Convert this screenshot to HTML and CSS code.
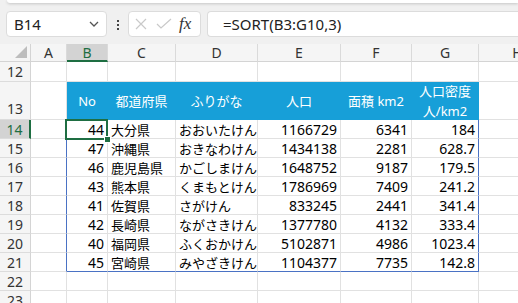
FILE: index.html
```html
<!DOCTYPE html>
<html lang="ja">
<head>
    <meta charset="UTF-8">
    <title>SORT</title>
    <link rel="stylesheet" href="styles.css">
</head>
<body>
    <div class="ribbon-edge"></div>
    <div class="formula-bar">
        <div class="name-box">
            <span>B14</span>
            <svg class="chevron" width="10" height="6" viewBox="0 0 10 6"><polyline points="1,1 5,5 9,1" fill="none" stroke="#555" stroke-width="1.3"/></svg>
        </div>
        <div class="dots"><i></i><i></i><i></i></div>
        <div class="fx-box">
            <svg width="12" height="12" viewBox="0 0 12 12"><path d="M1 1 L11 11 M11 1 L1 11" stroke="#c9c9c9" stroke-width="1.2"/></svg>
            <svg width="16" height="12" viewBox="0 0 16 12"><polyline points="1,6 5,10 15,1" fill="none" stroke="#c9c9c9" stroke-width="1.2"/></svg>
            <span class="fx">fx</span>
        </div>
        <div class="formula">=SORT(B3:G10,3)</div>
    </div>

    <div class="sheet">
        <!-- column headers -->
        <div class="corner"><svg width="12" height="12" viewBox="0 0 12 12"><polygon points="12,0 12,12 0,12" fill="#bdbdbd"/></svg></div>
        <div class="ch">A</div>
        <div class="ch sel">B</div>
        <div class="ch">C</div>
        <div class="ch">D</div>
        <div class="ch">E</div>
        <div class="ch">F</div>
        <div class="ch">G</div>
        <div class="ch">H</div>

        <!-- 12 -->
        <div class="rh">12</div>
        <div class="c"></div><div class="c"></div><div class="c"></div><div class="c"></div>
        <div class="c"></div><div class="c"></div><div class="c"></div><div class="c"></div>

        <!-- 13 -->
        <div class="rh bottom">13</div>
        <div class="c"></div>
        <div class="c th">No</div>
        <div class="c th">都道府県</div>
        <div class="c th">ふりがな</div>
        <div class="c th">人口</div>
        <div class="c th">面積 km2</div>
        <div class="c th two">人口密度<br>人/km2</div>
        <div class="c"></div>

        <!-- 14 -->
        <div class="rh sel">14</div>
        <div class="c edge"></div>
        <div class="c num active">44</div>
        <div class="c jp">大分県</div>
        <div class="c jp">おおいたけん</div>
        <div class="c num">1166729</div>
        <div class="c num">6341</div>
        <div class="c num last">184</div>
        <div class="c"></div>

        <!-- 15 -->
        <div class="rh">15</div>
        <div class="c edge"></div>
        <div class="c num">47</div>
        <div class="c jp">沖縄県</div>
        <div class="c jp">おきなわけん</div>
        <div class="c num">1434138</div>
        <div class="c num">2281</div>
        <div class="c num last">628.7</div>
        <div class="c"></div>

        <!-- 16 -->
        <div class="rh">16</div>
        <div class="c edge"></div>
        <div class="c num">46</div>
        <div class="c jp">鹿児島県</div>
        <div class="c jp">かごしまけん</div>
        <div class="c num">1648752</div>
        <div class="c num">9187</div>
        <div class="c num last">179.5</div>
        <div class="c"></div>

        <!-- 17 -->
        <div class="rh">17</div>
        <div class="c edge"></div>
        <div class="c num">43</div>
        <div class="c jp">熊本県</div>
        <div class="c jp">くまもとけん</div>
        <div class="c num">1786969</div>
        <div class="c num">7409</div>
        <div class="c num last">241.2</div>
        <div class="c"></div>

        <!-- 18 -->
        <div class="rh">18</div>
        <div class="c edge"></div>
        <div class="c num">41</div>
        <div class="c jp">佐賀県</div>
        <div class="c jp">さがけん</div>
        <div class="c num">833245</div>
        <div class="c num">2441</div>
        <div class="c num last">341.4</div>
        <div class="c"></div>

        <!-- 19 -->
        <div class="rh">19</div>
        <div class="c edge"></div>
        <div class="c num">42</div>
        <div class="c jp">長崎県</div>
        <div class="c jp">ながさきけん</div>
        <div class="c num">1377780</div>
        <div class="c num">4132</div>
        <div class="c num last">333.4</div>
        <div class="c"></div>

        <!-- 20 -->
        <div class="rh">20</div>
        <div class="c edge"></div>
        <div class="c num">40</div>
        <div class="c jp">福岡県</div>
        <div class="c jp">ふくおかけん</div>
        <div class="c num">5102871</div>
        <div class="c num">4986</div>
        <div class="c num last">1023.4</div>
        <div class="c"></div>

        <!-- 21 -->
        <div class="rh">21</div>
        <div class="c edge"></div>
        <div class="c num foot">45</div>
        <div class="c jp foot">宮崎県</div>
        <div class="c jp foot">みやざきけん</div>
        <div class="c num foot">1104377</div>
        <div class="c num foot">7735</div>
        <div class="c num last foot">142.8</div>
        <div class="c"></div>

        <!-- 22 -->
        <div class="rh">22</div>
        <div class="c"></div><div class="c"></div><div class="c"></div><div class="c"></div>
        <div class="c"></div><div class="c"></div><div class="c"></div><div class="c"></div>

        <!-- 23 -->
        <div class="rh">23</div>
        <div class="c"></div><div class="c"></div><div class="c"></div><div class="c"></div>
        <div class="c"></div><div class="c"></div><div class="c"></div><div class="c"></div>
    </div>
</body>
</html>
```

FILE: styles.css
```css
body {
    margin: 0;
    width: 518px;
    height: 303px;
    overflow: hidden;
    background-color: #f0f0f0;
    font-family: "Noto Sans", "Noto Sans CJK JP", sans-serif;
    color: #222;
}

.ribbon-edge {
    height: 3px;
    margin-left: 7px;
    background-color: #fff;
    border-radius: 0 0 0 6px;
    box-shadow: 0 1px 3px rgba(0, 0, 0, 0.18);
}

.formula-bar {
    display: flex;
    align-items: flex-start;
    height: 41px;
    padding: 8px 0 0 6px;
    box-sizing: border-box;
}

.name-box,
.fx-box,
.formula {
    height: 26px;
    box-sizing: border-box;
    background-color: #fff;
    border: 1px solid #dcdcdc;
    border-radius: 4px;
    display: flex;
    align-items: center;
}

.name-box {
    width: 101px;
    padding: 0 7px 0 7px;
    justify-content: space-between;
    font-size: 15px;
    color: #222;
}

.dots {
    width: 21px;
    display: flex;
    flex-direction: column;
    align-items: center;
    gap: 2px;
    padding-top: 9px;
}

.dots i {
    width: 2px;
    height: 2px;
    background-color: #444;
}

.fx-box {
    width: 73px;
    padding: 0 5px 0 6px;
    gap: 9px;
}

.fx {
    font-family: "Liberation Serif", serif;
    font-style: italic;
    font-size: 17px;
    color: #333;
    margin-left: -2px;
}

.formula {
    flex: 1;
    margin-left: 6px;
    border-right: none;
    border-radius: 4px 0 0 4px;
    padding-left: 15px;
    font-size: 15px;
}

.sheet {
    display: grid;
    grid-template-columns: 31px 36px 41px 68px 82px 83px 71px 67px 78px;
    grid-template-rows: 18px 20px 38px repeat(10, 19px);
    background-color: #fff;
    font-size: 14px;
}

.corner {
    background-color: #f5f5f5;
    border-right: 1px solid #d4d4d4;
    border-bottom: 1px solid #d4d4d4;
    display: flex;
    align-items: flex-end;
    justify-content: flex-end;
    padding: 0 3px 3px 0;
    box-sizing: border-box;
}

.ch {
    background-color: #f5f5f5;
    border-right: 1px solid #dadada;
    border-bottom: 1px solid #d4d4d4;
    box-sizing: border-box;
    display: flex;
    align-items: center;
    justify-content: center;
    color: #333;
    font-size: 14px;
}

.ch.sel {
    background-color: #d3d3d3;
    color: #1e6e42;
    border-bottom: 2px solid #1e6e42;
}

.rh {
    background-color: #f5f5f5;
    border-right: 1px solid #d4d4d4;
    border-bottom: 1px solid #dcdcdc;
    box-sizing: border-box;
    display: flex;
    align-items: center;
    justify-content: center;
    color: #333;
    font-size: 14px;
}

.rh.bottom {
    align-items: flex-end;
    padding-bottom: 1px;
}

.rh.sel {
    background-color: #d3d3d3;
    color: #1e6e42;
    border-right: 2px solid #1e6e42;
}

.c {
    border-right: 1px solid #e1e1e1;
    border-bottom: 1px solid #e1e1e1;
    box-sizing: border-box;
    display: flex;
    align-items: center;
    white-space: nowrap;
    color: #000;
}

.c.edge {
    border-right-color: #4a72c4;
}

.th {
    background-color: #179fd8;
    border-right-color: #179fd8;
    border-bottom-color: #179fd8;
    color: #fff;
    justify-content: center;
    font-size: 13px;
}

.th.two {
    text-align: center;
    line-height: 20px;
    padding-top: 1px;
}

.num {
    justify-content: flex-end;
    padding-right: 3px;
}

.jp {
    padding-left: 3px;
    font-size: 13px;
}

.c.last {
    border-right-color: #4a72c4;
}

.c.foot {
    border-bottom-color: #4a72c4;
}

.active {
    position: relative;
}

.active::after {
    content: "";
    position: absolute;
    left: -2px;
    top: -1px;
    right: -1px;
    bottom: -2px;
    border: 2px solid #1e6e42;
}

.active::before {
    content: "";
    position: absolute;
    right: -4px;
    bottom: -5px;
    width: 5px;
    height: 5px;
    background-color: #1e6e42;
    border: 1px solid #fff;
    z-index: 1;
}
```
